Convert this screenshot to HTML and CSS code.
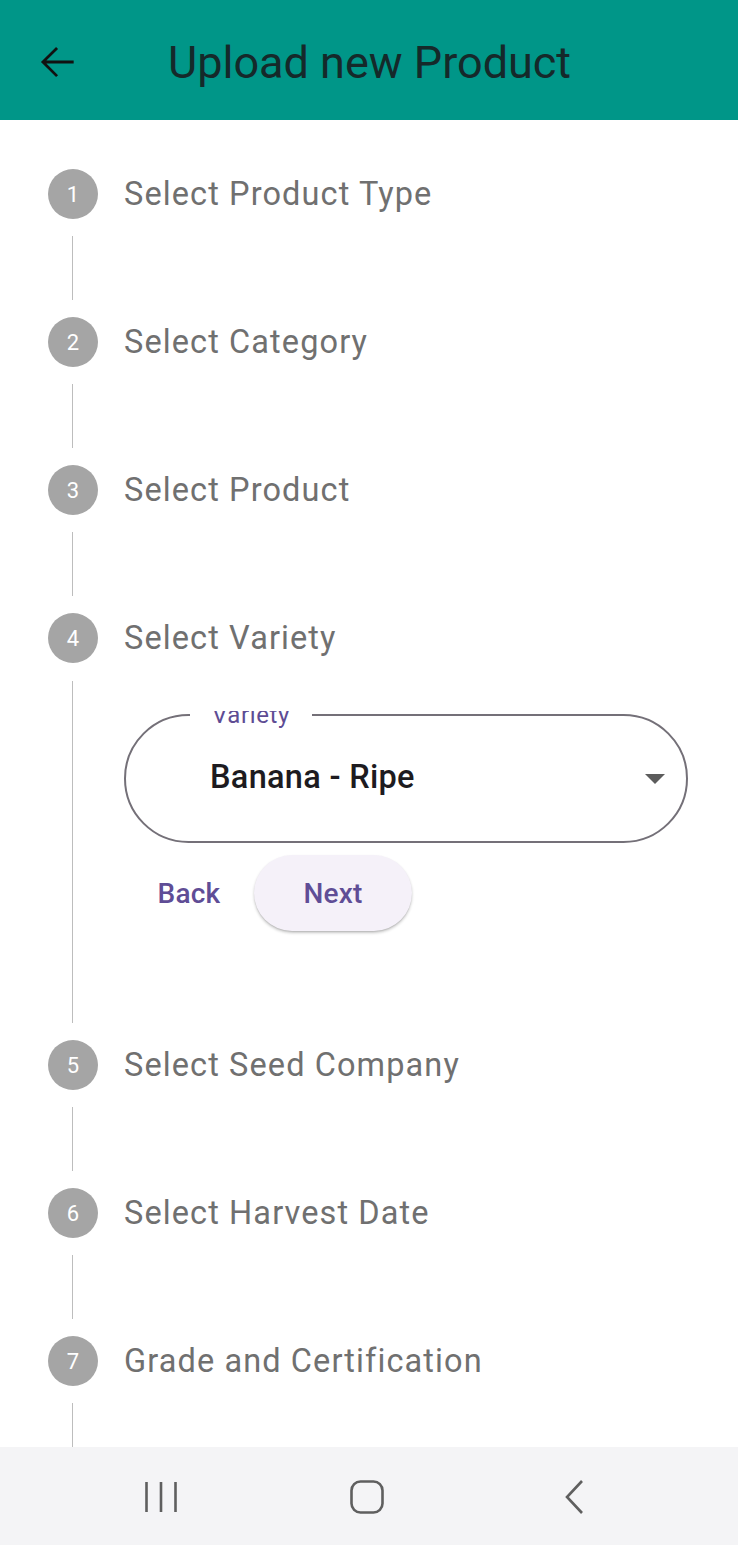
FILE: index.html
```html
<!DOCTYPE html>
<html lang="en">
<head>
<meta charset="utf-8">
<title>Upload new Product</title>
<link rel="stylesheet" href="styles.css">
</head>
<body>
<div class="screen">
  <header class="appbar">
    <svg class="back-icon" width="50" height="50" viewBox="0 0 24 24" aria-hidden="true">
      <path d="M20 11.3H6.9l5.6-5.6-.95-.95L4.3 12l7.25 7.25.95-.95-5.6-5.6H20z" fill="#111"/>
    </svg>
    <h1 class="title">Upload new Product</h1>
  </header>

  <main class="stepper">
    <div class="step-head"><span class="dot">1</span><span class="step-title">Select Product Type</span></div>
    <div class="connector"></div>

    <div class="step-head"><span class="dot">2</span><span class="step-title">Select Category</span></div>
    <div class="connector"></div>

    <div class="step-head"><span class="dot">3</span><span class="step-title">Select Product</span></div>
    <div class="connector"></div>

    <div class="step-head"><span class="dot">4</span><span class="step-title">Select Variety</span></div>
    <div class="step-body">
      <div class="clip">
        <div class="field">
          <span class="field-label">Variety</span>
          <span class="field-value">Banana - Ripe</span>
          <svg class="caret" width="20" height="10" viewBox="0 0 20 10" aria-hidden="true"><path d="M0 0h20L10 10z" fill="#5c5c5c"/></svg>
        </div>
      </div>
      <div class="controls">
        <button class="btn btn-text">Back</button>
        <button class="btn btn-tonal">Next</button>
      </div>
    </div>

    <div class="step-head"><span class="dot">5</span><span class="step-title">Select Seed Company</span></div>
    <div class="connector"></div>

    <div class="step-head"><span class="dot">6</span><span class="step-title">Select Harvest Date</span></div>
    <div class="connector"></div>

    <div class="step-head"><span class="dot">7</span><span class="step-title">Grade and Certification</span></div>
    <div class="connector"></div>
  </main>

  <nav class="navbar">
    <svg class="nav-recent" width="32" height="32" viewBox="0 0 32 32" aria-hidden="true">
      <path d="M1.5 1v30M16 1v30M30.5 1v30" stroke="#5f5f5f" stroke-width="2.6" fill="none"/>
    </svg>
    <svg class="nav-home" width="34" height="34" viewBox="0 0 34 34" aria-hidden="true">
      <rect x="1.5" y="1.5" width="31" height="31" rx="9" stroke="#5f5f5f" stroke-width="2.6" fill="none"/>
    </svg>
    <svg class="nav-back" width="22" height="36" viewBox="0 0 22 36" aria-hidden="true">
      <path d="M19 2L4 18l15 16" stroke="#5f5f5f" stroke-width="2.6" fill="none"/>
    </svg>
  </nav>
</div>
</body>
</html>
```

FILE: styles.css
```css
* { box-sizing: border-box; }
html, body { margin: 0; padding: 0; background: #fff; }
body { font-family: Roboto, "Noto Sans", "Liberation Sans", sans-serif; }

.screen {
  width: 738px;
  height: 1545px;
  display: flex;
  flex-direction: column;
  overflow: hidden;
}

.appbar {
  height: 120px;
  flex: none;
  background: #009688;
  display: flex;
  align-items: center;
  padding-left: 32px;
  padding-top: 4px;
}
.back-icon { flex: none; }
.title {
  margin: 0 0 0 86px;
  font-size: 45px;
  font-weight: 400;
  color: #15292a;
  letter-spacing: 0;
  line-height: 1;
}

.stepper {
  flex: 1;
  overflow: hidden;
  padding: 49px 50px 0 48px;
}

.step-head {
  height: 50px;
  display: flex;
  align-items: center;
  gap: 26px;
}
.dot {
  width: 50px;
  height: 50px;
  border-radius: 50%;
  background: #a5a5a5;
  color: #fff;
  font-size: 22px;
  display: flex;
  align-items: center;
  justify-content: center;
  flex: none;
}
.step-title {
  font-size: 32.5px;
  color: #707070;
  letter-spacing: 1.1px;
  line-height: 1;
}

.connector {
  margin: 17px 0 17px 24px;
  height: 64px;
  border-left: 1.5px solid #bdbdbd;
}

.step-body {
  margin: 18px 0 17px 24px;
  height: 342px;
  border-left: 1.5px solid #bdbdbd;
  padding: 30px 0 0 51px;
}

.clip {
  padding-top: 3px;
  overflow: hidden;
}

.field {
  position: relative;
  height: 129px;
  border: 2px solid #747078;
  border-radius: 65px;
  display: flex;
  align-items: center;
  padding: 0 21px 0 84px;
}
.field-label {
  position: absolute;
  left: 64px;
  top: -12px;
  padding: 0 22px;
  background: #fff;
  color: #5e4c94;
  font-size: 24px;
  line-height: 22px;
  letter-spacing: 0.6px;
}
.field-value {
  flex: 1;
  font-size: 32.5px;
  font-weight: 500;
  color: #1d1b20;
  letter-spacing: 0.3px;
  margin-top: -3px;
}
.caret { flex: none; }

.controls {
  display: flex;
  align-items: center;
  margin-top: 12px;
}
.btn {
  font-family: inherit;
  font-size: 28px;
  font-weight: 500;
  color: #5f4d96;
  border: 0;
  height: 76px;
  border-radius: 38px;
  letter-spacing: 0.2px;
  cursor: pointer;
}
.btn-text {
  background: transparent;
  width: 130px;
  padding: 0;
}
.btn-tonal {
  background: #f5f1f9;
  width: 158px;
  padding: 0;
  box-shadow: 0 2px 3px rgba(0,0,0,0.22), 0 1px 1px rgba(0,0,0,0.08);
}

.navbar {
  height: 98px;
  flex: none;
  background: #f4f4f6;
  display: flex;
  align-items: center;
  padding-left: 145px;
}
.nav-recent { flex: none; margin-top: 1px; }
.nav-home { flex: none; margin-left: 173px; margin-top: 1px; }
.nav-back { flex: none; margin-left: 179px; margin-top: 1px; }
```
